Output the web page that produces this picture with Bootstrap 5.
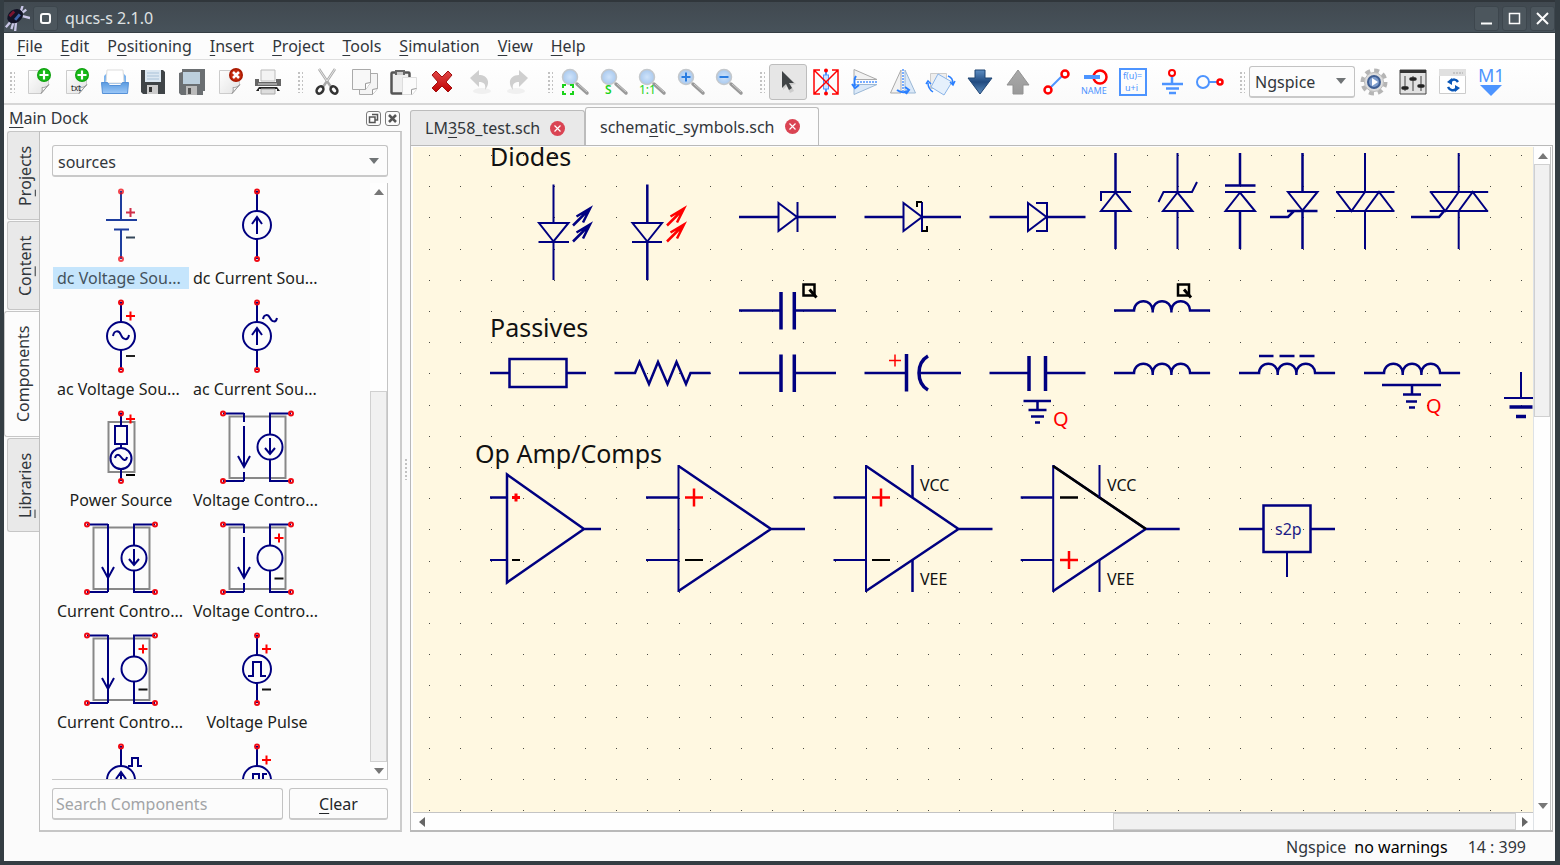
<!DOCTYPE html>
<html lang="en">
<head>
<meta charset="utf-8">
<meta name="viewport" content="width=device-width, initial-scale=1">
<title>qucs-s 2.1.0</title>
<link href="https://cdn.jsdelivr.net/npm/bootstrap@5.3.0/dist/css/bootstrap.min.css" rel="stylesheet">
<style>
body{font-family:"Noto Sans",sans-serif;font-size:16px;line-height:22px;color:#31363b;background:#30383e}
svg{display:block;flex:none}
u{text-underline-offset:3px;text-decoration-thickness:1px}
.app-window{height:100vh;border:solid #343d43;border-width:0 5px 4px 4px}
.title-row,.menu-row,.tool-row,.dock-title,.doc-tabs,.status-row{flex:none}
.title-row{height:33px;padding-top:2px;background:linear-gradient(#414950,#47525a);border-top:2px solid #30363b;border-bottom:1px solid #343d43;color:#dfe1e2;gap:3px}
.win-btn{width:25px;height:25px;background:#4c565d;border:1px solid #3d464d;border-radius:3px;color:#fcfcfc}
.client{background:#fbfbfb}
.menu-row{height:27px;border-bottom:1px solid #dedede;gap:18px;padding:0 13px;background:#fcfcfc}
.menu-row a{color:#31363b;text-decoration:none}
.tool-row{height:45px;border-bottom:2px solid #d6d6d6;background:linear-gradient(#fff,#fafafa);padding-left:5px}
.grip{width:6px;height:22px;background:radial-gradient(circle,#c2c2c2 1px,transparent 1px) 0 0/4px 4px}
.tool-group{display:flex;justify-content:space-between}
.tool-group.g7{width:267px;margin:0 10px 0 5px}
.tool-group.g6{width:229px;margin:0 10px 0 5px}
.tool-group.g5{width:192px;margin:0 11px 0 3px}
.tool-group.g12{width:460px;margin:0 10px 0 4px}
.tool-group.g4{width:155px}
.tool-btn{width:38px;height:36px;border:1px solid transparent;border-radius:3px;background:none;padding:0;display:flex;align-items:center;justify-content:center}
.tool-btn svg{overflow:visible}
.tool-btn.on{background:#e6e6e6;border-color:#bdbdbd}
.combo{font-size:16px;line-height:22px;color:#31363b;border:1px solid #c3c3c3;border-bottom:2px solid #c9c9c9;border-radius:3px;background-color:#fcfcfc;height:32px;padding:4px 28px 2px 5px;background-image:url("data:image/svg+xml,%3Csvg xmlns='http://www.w3.org/2000/svg' viewBox='0 0 10 6'%3E%3Cpath fill='%23707476' d='M0 0h10L5 6z'/%3E%3C/svg%3E");background-size:10px 6px;background-position:right 8px center}
.engine{width:106px}
.dock{width:398px;flex:none}
.dock-title{height:26px;padding:0 2px 0 5px}
.mini-btn{width:15px;height:15px;border:1px solid #7b7b7b;border-radius:3px;background:#fcfcfc;padding:0;color:#555}
.side-tabs{width:35px;flex:none;padding-left:3px;gap:1px}
.side-tab{writing-mode:vertical-rl;transform:rotate(180deg);background:#e9e9e9;border:1px solid #c6c6c6;border-left:0;border-radius:0 3px 3px 0;color:#31363b;padding:0 4px 0 2px;width:32px;text-align:center;line-height:24px;height:89px}
.side-tab u{text-underline-offset:1px}
.side-tab.on{background:#fcfcfc;width:35px;margin-left:-3px;padding:0 5px 0 3px;height:126px}
.side-tab.tall{height:94px}
.dock-page{min-width:0;border:1px solid #bfbfbf;border-right:2px solid #ccc;border-bottom:2px solid #c6c6c6;background:#fcfcfc;padding:13px 12px 10px 12px}
.parts{border-bottom:1px solid #c8c8c8;min-height:0;overflow:hidden;margin-top:6px}
.parts-grid{display:grid;grid-template-columns:136px 136px;grid-auto-rows:102px;row-gap:9px;padding:4px 0 0 1px;align-content:start;overflow:hidden;color:#1c1e20}
.part{display:flex;flex-direction:column;text-align:left;padding:0;border:0;background:none;color:inherit}
.part svg{margin:0 auto}
.part span{display:block;width:136px;height:22px;padding:0 4px;white-space:nowrap}
.part.short span{text-align:center}
.part.on span{background:#c5e5fc;color:#43525c}
.sb{background:#fefefe;border:solid #c4c4c4;display:flex;flex:none}
.sb.v{width:18px;flex-direction:column;border-width:0 1px 0 0}
.sb.h{height:18px;border-width:1px 0 0}
.sb-end{width:17px;height:17px;padding:0;border:0;background:none;display:flex;align-items:center;justify-content:center;flex:none}
.sb-thumb{background:#f1f1f1;border:1px solid #d0d0d0}
.search-box,.clear-btn{height:32px;border:1px solid #c3c3c3;border-bottom:2px solid #c9c9c9;border-radius:3px;font-size:16px;line-height:22px;background:#fcfcfc;padding:2px 3px;color:#232629}
.search-box{width:0;min-width:0}
.search-box::placeholder{color:#a2a4a6}
.clear-btn{width:99px;flex:none}
.splitter{width:8px;flex:none}
.doc-tabs{height:38px;margin-top:2px}
.doc-tab{border:1px solid #bcbcbc;border-bottom:0;border-radius:3px 3px 0 0;color:#31363b;background:#e9e9e9;height:35px;width:175px;padding:0 14px;gap:10px;text-align:left}
.doc-tab.on{background:#fcfcfc;height:38px;width:234px}
.doc-frame{border:2px solid #b9b9b9;border-width:1px 1px 2px 1px;background:#fdfdfd;padding:1px 1px 0 2px;margin-right:2px;min-height:0}
.sheet{background:#fff8e1;min-height:0;min-width:0}
.sheet svg{width:100%;height:100%;position:absolute;inset:0}
.sheet text{font-family:"Noto Sans",sans-serif}
.status-row{height:29px;padding:0 29px 0 0;gap:8px}
</style>
</head>
<body>
<svg width="0" height="0" class="position-absolute" aria-hidden="true">
<defs>
<linearGradient id="paper" x1="0" y1="0" x2="1" y2="1"><stop offset="0" stop-color="#fff"/><stop offset="1" stop-color="#e2e2e2"/></linearGradient>
<linearGradient id="blueG" x1="0" y1="0" x2="0" y2="1"><stop offset="0" stop-color="#5f8fc4"/><stop offset=".5" stop-color="#204a80"/><stop offset="1" stop-color="#5d8dc0"/></linearGradient>
<linearGradient id="greyG" x1="0" y1="0" x2="0" y2="1"><stop offset="0" stop-color="#aaa"/><stop offset="1" stop-color="#999"/></linearGradient>
<linearGradient id="redG" x1="0" y1="0" x2="0" y2="1"><stop offset="0" stop-color="#e04848"/><stop offset="1" stop-color="#c00000"/></linearGradient>
<linearGradient id="trayG" x1="0" y1="0" x2="0" y2="1"><stop offset="0" stop-color="#5a9be0"/><stop offset="1" stop-color="#9cc8f8"/></linearGradient>
<radialGradient id="lensG"><stop offset="0" stop-color="#cfe3fa"/><stop offset="1" stop-color="#a9c9ee"/></radialGradient>
<g id="page"><path d="M3.500 2.500h20v14l-7 9h-13z" fill="url(#paper)" stroke="#ccc"/><path d="M16 25.500c2-3 1-5 1-6 2 0 4 0 7-3z" fill="#f4f4f4" stroke="#999"/></g>
<g id="plusBall"><circle cx="19" cy="7" r="7" fill="#0b9e0b"/><circle cx="19" cy="7" r="6" fill="#18b818"/><path d="M14.500 7h9M19 2.500v9" stroke="#fff" stroke-width="2.200"/></g>
<g id="lens"><path d="M16 16l10 9" stroke="#999" stroke-width="3.500" stroke-linecap="round"/><path d="M17 16l9 8" stroke="#ccc" stroke-width="1"/><circle cx="9" cy="9" r="7.500" fill="url(#lensG)" stroke="#c4c8cc" stroke-width="1.500"/></g>
<g id="nd"><circle r="2" fill="none" stroke="#f00a14" stroke-width="2"/></g>
<g id="plus"><path d="M-4.500 0h9M0-4.500v9" stroke="red" fill="none"/></g>
<g id="ctl" fill="none" stroke="navy" stroke-width="2"><path d="M12.500 7.500h56v61.500h-56z" stroke="#888"/><path d="M6 4.500h21M6 72h21M74 4.500H53v21M74 72H53V50.500M21 47l6 11 6-11"/><circle cx="53" cy="38" r="12.500"/><use href="#nd" x="6" y="4.500"/><use href="#nd" x="74" y="4.500"/><use href="#nd" x="6" y="72"/><use href="#nd" x="74" y="72"/></g>
<g id="src" fill="none" stroke="navy" stroke-width="2"><path d="M40 4v20M40 52v20"/><circle cx="40" cy="38" r="14"/><use href="#nd" x="40" y="4.500"/><use href="#nd" x="40" y="72"/></g>
<path id="ell" d="M0 0h20a9.300 9.300 0 0 1 18.700 0v2v-2a9.300 9.300 0 0 1 18.700 0v2v-2a9.300 9.300 0 0 1 18.700 0h20"/>
<g id="cap"><path d="M0 0h42M55 0h42"/><path d="M42-18.500v37.500M55.300-18.500v37.500" stroke-width="3.500"/></g>
<g id="cutQ" stroke="#000" fill="none"><path d="M0 0h11v11H0z"/><path d="M6 5l7 8" stroke-width="3"/></g>
<g id="ledArrow"><path d="M0 17L17 0M3.500 8L17 0l-7 14M0 33l17-17M3.500 24L17 16l-7 14"/></g>
</defs>
</svg>

<div class="app-window d-flex flex-column">
<header class="title-row d-flex align-items-center">
  <svg width="26" height="25" viewBox="0 0 28 25"><path d="M2 22l6-7M8 24l3-10M12 26l1-10M20 10l8 2M18 5l2-6M20 6l4-3" stroke="#c9c6e6" stroke-width="2.500"/><ellipse cx="12" cy="10" rx="9" ry="7" transform="rotate(-35 12 10)" fill="#121225"/><path d="M6 10l5-5" stroke="#7a1530" stroke-width="3"/><path d="M12 14l5-6" stroke="#3e63a8" stroke-width="3"/></svg>
  <button class="win-btn p-0 d-flex align-items-center justify-content-center" aria-label="Window menu"><svg width="13" height="13"><rect x="2" y="2" width="9" height="9" rx="2" fill="none" stroke="#fcfcfc" stroke-width="2"/></svg></button>
  <span class="me-auto ps-1">qucs-s 2.1.0</span>
  <button class="win-btn p-0 d-flex align-items-center justify-content-center" aria-label="Minimize"><svg width="13" height="13"><path d="M1 11.500h11" stroke="#fcfcfc" stroke-width="2"/></svg></button>
  <button class="win-btn p-0 d-flex align-items-center justify-content-center" aria-label="Maximize"><svg width="13" height="13"><path d="M1.500 1.500h10v10h-10z" fill="none" stroke="#fcfcfc" stroke-width="1.500"/></svg></button>
  <button class="win-btn p-0 d-flex align-items-center justify-content-center" aria-label="Close"><svg width="13" height="13"><path d="M1 1l11 11M12 1L1 12" stroke="#fcfcfc" stroke-width="2"/></svg></button>
</header>
<div class="client d-flex flex-column flex-grow-1" style="min-height:0">
<nav class="menu-row d-flex align-items-center">
  <a href="#"><u>F</u>ile</a><a href="#"><u>E</u>dit</a><a href="#">P<u>o</u>sitioning</a><a href="#"><u>I</u>nsert</a><a href="#"><u>P</u>roject</a><a href="#"><u>T</u>ools</a><a href="#"><u>S</u>imulation</a><a href="#"><u>V</u>iew</a><a href="#"><u>H</u>elp</a>
</nav>
<div class="tool-row d-flex align-items-center">
  <span class="grip"></span>
  <div class="tool-group g7">
    <button class="tool-btn" aria-label="New"><svg width="28" height="28"><use href="#page"/><use href="#plusBall"/></svg></button>
    <button class="tool-btn" aria-label="New text"><svg width="28" height="28"><use href="#page"/><use href="#plusBall"/><text x="8" y="23" font-size="8" fill="#222">txt</text></svg></button>
    <button class="tool-btn" aria-label="Open"><svg width="28" height="28"><path d="M3 8l3-3h16l3 3v8H3z" fill="#7db4ee"/><path d="M6 2h16l1 13H5z" fill="#fff" stroke="#ddd"/><path d="M.5 14.500h6l2 3h11l2-3h6l-1 11h-25z" fill="url(#trayG)" stroke="#5591d8"/></svg></button>
    <button class="tool-btn" aria-label="Save"><svg width="28" height="28"><path d="M2 2h22l2 2v22H4l-2-2z" fill="#3f4447"/><path d="M6 2h16v12H6z" fill="#dce8f2"/><path d="M8 5h12M8 8h12M8 11h12" stroke="#a9c2d8"/><path d="M8 17h11v9H8z" fill="#ccc"/><path d="M10 19h3v5h-3z" fill="#333"/></svg></button>
    <button class="tool-btn" aria-label="Save all"><svg width="28" height="28"><path d="M4 1h23v22h-2v4H3l-2-2V5l3-1z" fill="#6b6f72"/><path d="M5 4h17v12H5z" fill="#bccfdd"/><path d="M8 18h11v9H8z" fill="#bbb"/><path d="M10 20h3v6h-3z" fill="#555"/></svg></button>
    <button class="tool-btn" aria-label="Close file"><svg width="28" height="28"><use href="#page"/><circle cx="20" cy="7" r="7" fill="#a81800"/><circle cx="20" cy="7" r="5.500" fill="#c42b0c"/><path d="M17 4l6 6M23 4l-6 6" stroke="#fff" stroke-width="2.500"/></svg></button>
    <button class="tool-btn" aria-label="Print"><svg width="28" height="28"><path d="M7 2h14v11H7z" fill="#f3f3f3" stroke="#bbb"/><path d="M1 11h4v3h17v-3h5v7H1z" fill="#666"/><path d="M4 16h19" stroke="#ddd"/><path d="M5 19h18l3 4h-3v-2H5v2H2z" fill="#222"/><path d="M7 21h14v5H7z" fill="#ddd" stroke="#aaa"/></svg></button>
  </div>
  <span class="grip"></span>
  <div class="tool-group g6">
    <button class="tool-btn" aria-label="Cut"><svg width="28" height="28"><path d="M6 1l12 18M22 1L10 19" stroke="#aaa" stroke-width="2.500"/><path d="M6 1l8 12M22 1l-8 12" stroke="#e8e8e8"/><ellipse cx="7" cy="22" rx="3" ry="4" transform="rotate(40 7 22)" fill="none" stroke="#333" stroke-width="2.500"/><ellipse cx="21" cy="22" rx="3" ry="4" transform="rotate(-40 21 22)" fill="none" stroke="#333" stroke-width="2.500"/></svg></button>
    <button class="tool-btn" aria-label="Copy"><svg width="28" height="28"><path d="M8.500 5.500h18v15l-5 6h-13z" fill="#f4f4f4" stroke="#aaa"/><path d="M1.500 1.500h18v13l-5 7h-13z" fill="#f8f8f8" stroke="#aaa"/><path d="M14.500 21.500v-6l5-1M21.500 26.500v-5l5-1" fill="#fff" stroke="#999"/></svg></button>
    <button class="tool-btn" aria-label="Paste"><svg width="28" height="28"><rect x="2.500" y="4.500" width="18" height="21" rx="1" fill="#eee" stroke="#555" stroke-width="2.500"/><path d="M6 2h10v5H6z" fill="#666"/><path d="M8 4h6v3H8z" fill="#ccc"/><path d="M13.500 9.500h14v12l-4 5h-10z" fill="#fbfbfb" stroke="#ddd"/><path d="M22.500 26.500v-5l5-1" fill="#fff" stroke="#999"/></svg></button>
    <button class="tool-btn" aria-label="Delete"><svg width="28" height="28"><path d="M4 7l4-4 6 6 6-6 4 4-6 7 6 6-4 4-6-6-6 6-4-4 6-6z" fill="url(#redG)" stroke="#a01010"/></svg></button>
    <button class="tool-btn" aria-label="Undo"><svg width="28" height="28"><ellipse cx="16" cy="23" rx="9" ry="3" fill="#f0f0f0"/><path d="M4 10l9-8v5c9 0 12 8 6 15 1-6-1-8-6-8v5z" fill="#cfcfcf"/></svg></button>
    <button class="tool-btn" aria-label="Redo"><svg width="28" height="28"><ellipse cx="12" cy="23" rx="9" ry="3" fill="#f0f0f0"/><path d="M24 10l-9-8v5c-9 0-12 8-6 15-1-6 1-8 6-8v5z" fill="#cfcfcf"/></svg></button>
  </div>
  <span class="grip"></span>
  <div class="tool-group g5">
    <button class="tool-btn" aria-label="Zoom to fit"><svg width="28" height="28"><use href="#lens"/><path d="M2 20v-3h3M9 17h3v3M12 23v3H9M5 26H2v-3" fill="none" stroke="#1bd31b" stroke-width="2"/></svg></button>
    <button class="tool-btn" aria-label="Zoom to selection"><svg width="28" height="28"><use href="#lens"/><text x="5" y="26" font-size="12" font-weight="600" fill="#1bd31b">S</text></svg></button>
    <button class="tool-btn" aria-label="Zoom 1:1"><svg width="28" height="28"><use href="#lens"/><text x="1" y="26" font-size="12" fill="#1bd31b">1:1</text></svg></button>
    <button class="tool-btn" aria-label="Zoom in"><svg width="28" height="28"><use href="#lens"/><path d="M4.500 9h9M9 4.500v9" stroke="#2a7de1" stroke-width="2"/></svg></button>
    <button class="tool-btn" aria-label="Zoom out"><svg width="28" height="28"><use href="#lens"/><path d="M4.500 9h9" stroke="#2a7de1" stroke-width="2"/></svg></button>
  </div>
  <span class="grip"></span>
  <div class="tool-group g12">
    <button class="tool-btn on" aria-label="Select"><svg width="28" height="28"><path d="M9 4v18l4-4 3 7 4-2-3-6 5-1z" fill="#ccc"/><path d="M8 3v17l4-4 3 6 3-2-3-5h5z" fill="#3f4345"/></svg></button>
    <button class="tool-btn" aria-label="Deactivate"><svg width="28" height="28"><rect x="11.500" y="7" width="5" height="14" fill="#cfe3ff" stroke="#4d94ff"/><path d="M14 3v4M14 21v4" stroke="#4d94ff" stroke-width="2"/><path d="M8 2H2v24h6M20 2h6v24h-6M2 2l24 24M26 2L2 26" fill="none" stroke="red" stroke-width="1.500"/><circle cx="14" cy="2.500" r="2" fill="red"/><circle cx="14" cy="25.500" r="2" fill="red"/></svg></button>
    <button class="tool-btn" aria-label="Mirror about X"><svg width="28" height="28"><path d="M3 1.500l23 10H3z" fill="#f2f2f2" stroke="#aaa"/><path d="M3 26.500l23-10H3z" fill="#dbe9f8" stroke="#9bb8d6"/><path d="M6 14h20" stroke="#4d94ff" stroke-width="1.500" stroke-dasharray="2 1"/><path d="M5 8c-2 3-2 6-1 10M1 16l3 4 4-3" fill="none" stroke="#2a7fff" stroke-width="2"/></svg></button>
    <button class="tool-btn" aria-label="Mirror about Y"><svg width="28" height="28"><path d="M1.500 25L12 2v23z" fill="#f2f2f2" stroke="#aaa"/><path d="M26.500 25L16 2v23z" fill="#dbe9f8" stroke="#9bb8d6"/><path d="M14 1v22" stroke="#4d94ff" stroke-width="1.500" stroke-dasharray="2 1"/><path d="M8 22c4 3 7 3 11 1M16 19l4 3-3 4" fill="none" stroke="#2a7fff" stroke-width="2"/></svg></button>
    <button class="tool-btn" aria-label="Rotate"><svg width="28" height="28"><path d="M3.500 5.500h16v15h-16z" fill="#eee" stroke="#ccc"/><path d="M11 6l14 8-8 13-13-8z" fill="#e5f0fc" stroke="#8ab4e8"/><path d="M1 15c0 5 2 7 5 9M-1 16l2-3 3 3M21 8c3 1 5 3 5 8M23 14l3 3 2-4" fill="none" stroke="#2a7fff" stroke-width="1.500"/></svg></button>
    <button class="tool-btn" aria-label="Into subcircuit"><svg width="28" height="28"><path d="M9 2h10v8h7L14 26 2 10h7z" fill="url(#blueG)" stroke="#1f4473"/></svg></button>
    <button class="tool-btn" aria-label="Pop out"><svg width="28" height="28"><path d="M9 26h10v-9h6L14 2 3 17h6z" fill="url(#greyG)" stroke="#929292"/></svg></button>
    <button class="tool-btn" aria-label="Wire"><svg width="28" height="28"><path d="M7 20L20 7" stroke="#4d94ff" stroke-width="2"/><circle cx="5" cy="22" r="3.500" fill="#fff" stroke="red" stroke-width="2.500"/><circle cx="22" cy="6" r="3.500" fill="#fff" stroke="red" stroke-width="2.500"/></svg></button>
    <button class="tool-btn" aria-label="Wire label"><svg width="28" height="28"><circle cx="19" cy="9" r="6.500" fill="none" stroke="red" stroke-width="2.500"/><path d="M3 9h16" stroke="#4d94ff" stroke-width="4"/><text x="0" y="26" font-size="9" fill="#4d94ff">NAME</text></svg></button>
    <button class="tool-btn" aria-label="Equation"><svg width="28" height="28"><path d="M1 1h26v26H1z" fill="none" stroke="#4d94ff" stroke-width="2"/><text x="4" y="11" font-size="9" fill="#4d94ff">f(u)=</text><text x="6" y="23" font-size="9" fill="#4d94ff">u+i</text></svg></button>
    <button class="tool-btn" aria-label="Ground"><svg width="28" height="28"><path d="M14 8v8M4 16h21M8 20.500h13M11 25h7" stroke="#4d94ff" stroke-width="2.500"/><circle cx="14" cy="5" r="3" fill="#fff" stroke="red" stroke-width="2"/></svg></button>
    <button class="tool-btn" aria-label="Port"><svg width="28" height="28"><path d="M13 14h8" stroke="#4d94ff" stroke-width="2"/><circle cx="7" cy="14" r="6" fill="none" stroke="#4d94ff" stroke-width="2"/><circle cx="24" cy="14" r="2.500" fill="none" stroke="red" stroke-width="2.500"/></svg></button>
  </div>
  <span class="grip me-1"></span>
  <select class="form-select combo engine" aria-label="Simulator"><option>Ngspice</option></select>
  <div class="tool-group g4">
    <button class="tool-btn" aria-label="Simulate"><svg width="28" height="28"><circle cx="14" cy="14" r="11.500" fill="none" stroke="#b5b5b5" stroke-width="4" stroke-dasharray="5 4"/><circle cx="14" cy="14" r="9.500" fill="#ddd" stroke="#bbb"/><circle cx="14" cy="14" r="7" fill="#3f5e92"/><circle cx="14" cy="14" r="5" fill="#7d9ccc"/><path d="M12 10l6 4-6 4z" fill="#fff"/></svg></button>
    <button class="tool-btn" aria-label="Tuner"><svg width="28" height="28"><path d="M1 2h26v24H1z" fill="#e2e2e2" stroke="#444"/><path d="M1 2h26v3H1z" fill="#333"/><path d="M6 8v15M14 8v15M22 8v15" stroke="#777" stroke-width="1.500"/><path d="M4 20h4M12 11h4M20 18h4" stroke="#222" stroke-width="3.500" stroke-linecap="round"/></svg></button>
    <button class="tool-btn" aria-label="View data"><svg width="28" height="28"><path d="M1.500 1.500h26v24h-26z" fill="#fff" stroke="#ccc"/><path d="M1 1h27v7H1z" fill="#e0e0e0"/><path d="M15 5h10" stroke="#bbb" stroke-width="1.500" stroke-dasharray="2 1"/><path d="M20 14c-2-3-5-3-7-1M10 19c2 4 6 4 8 2" fill="none" stroke="#0a57b8" stroke-width="2.500"/><path d="M9 14l5-4v7zM22 20l-5-3v7z" fill="#0a57b8"/></svg></button>
    <button class="tool-btn" aria-label="Marker"><svg width="28" height="28"><text x="1" y="14" font-size="18" fill="#4d94ff">M1</text><path d="M3 17h22L14 28z" fill="#4d94ff"/></svg></button>
  </div>
</div>

<main class="d-flex flex-grow-1" style="min-height:0">
<aside class="dock d-flex flex-column">
  <div class="dock-title d-flex align-items-center gap-1"><span class="me-auto"><u>M</u>ain Dock</span>
    <button class="mini-btn" aria-label="Float"><svg width="13" height="13"><path d="M5 2.500h5.500V8H8M2.500 5H8v5.500H2.500z" fill="none" stroke="#555" stroke-width="1.500"/></svg></button>
    <button class="mini-btn" aria-label="Close dock"><svg width="13" height="13"><path d="M3 3l7 7M10 3l-7 7" stroke="#555" stroke-width="2.500"/></svg></button>
  </div>
  <div class="d-flex flex-grow-1" style="min-height:0">
    <div class="side-tabs d-flex flex-column">
      <button class="side-tab">P<u>r</u>ojects</button><button class="side-tab">Co<u>n</u>tent</button><button class="side-tab on">Components</button><button class="side-tab tall"><u>L</u>ibraries</button>
    </div>
    <div class="dock-page flex-grow-1 d-flex flex-column">
      <select class="form-select combo flex-shrink-0" aria-label="Category"><option>sources</option></select>
      <div class="parts d-flex flex-grow-1">
        <div class="parts-grid flex-grow-1">
          <button class="part on"><svg width="80" height="80" fill="none" stroke="#1d3d9e" stroke-width="2"><path d="M40 4v29M25 33h31M33 42.500h15M40 42.500V72"/><path d="M45 25.500h9M49.500 21v9" stroke="#cf2f4a"/><path d="M45 50.500h9" stroke="#34475a"/><g opacity=".75"><use href="#nd" x="40" y="4.500"/><use href="#nd" x="40" y="72"/></g></svg><span>dc Voltage Sou...</span></button>
          <button class="part"><svg width="80" height="80"><use href="#src"/><path d="M40 47V30M35 37l5-7 5 7" fill="none" stroke="navy" stroke-width="2"/></svg><span>dc Current Sou...</span></button>
          <button class="part"><svg width="80" height="80" stroke-width="2" fill="none"><use href="#src"/><path d="M32 38c1-6 6-6 8-1s7 6 8 0" stroke="navy"/><use href="#plus" x="49.500" y="18"/><path d="M45 58h9" stroke="#222"/></svg><span>ac Voltage Sou...</span></button>
          <button class="part"><svg width="80" height="80" stroke-width="2" fill="none"><use href="#src"/><path d="M40 47V30M35 37l5-7 5 7M46 21c1-5 5-5 7-1s6 5 7 0" stroke="navy"/></svg><span>ac Current Sou...</span></button>
          <button class="part short"><svg width="80" height="80" stroke-width="2" fill="none"><path d="M27.500 13h26v50h-26z" stroke="#888"/><path d="M40 4v13M40 35v4M40 60v12M34 17h12v18H34zM34 49c1-4 4-4 6-1s5 5 6 0" stroke="navy"/><circle cx="40" cy="49.500" r="10.500" stroke="navy"/><use href="#nd" x="40" y="4.500"/><use href="#nd" x="40" y="72"/><use href="#plus" x="49.500" y="10"/><path d="M45 66h9" stroke="#000"/></svg><span>Power Source</span></button>
          <button class="part"><svg width="80" height="80" fill="none" stroke="navy" stroke-width="2"><use href="#ctl"/><path d="M27 4v9M27 17v41M27 63v9M53 29v15M48 39l5 6 5-6"/></svg><span>Voltage Contro...</span></button>
          <button class="part"><svg width="80" height="80" fill="none" stroke="navy" stroke-width="2"><use href="#ctl"/><path d="M27 4v68M53 29v15M48 39l5 6 5-6"/></svg><span>Current Contro...</span></button>
          <button class="part"><svg width="80" height="80" fill="none" stroke="navy" stroke-width="2"><use href="#ctl"/><path d="M27 4v9M27 17v41M27 63v9"/><use href="#plus" x="62" y="18"/><path d="M57.500 58.500h9" stroke="#111"/></svg><span>Voltage Contro...</span></button>
          <button class="part"><svg width="80" height="80" fill="none" stroke="navy" stroke-width="2"><use href="#ctl"/><path d="M27 4v68"/><use href="#plus" x="62" y="18"/><path d="M57.500 58.500h9" stroke="#111"/></svg><span>Current Contro...</span></button>
          <button class="part short"><svg width="80" height="80" fill="none" stroke="navy" stroke-width="2"><use href="#src"/><path d="M31 45h5V31h8v14h5"/><use href="#plus" x="49.500" y="18"/><path d="M45 58.500h9" stroke="#111"/></svg><span>Voltage Pulse</span></button>
          <button class="part" aria-label="Current Pulse"><svg width="80" height="80" fill="none" stroke="navy" stroke-width="2"><use href="#src"/><path d="M40 47V30M35 37l5-7 5 7M47 24h4v-8h6v8h4"/></svg></button>
          <button class="part" aria-label="Rectangle Voltage"><svg width="80" height="80" fill="none" stroke="navy" stroke-width="2"><use href="#src"/><path d="M33 45h3V32h6v13h4V32h4"/><use href="#plus" x="49.500" y="18"/></svg></button>
        </div>
        <div class="sb v"><button class="sb-end" aria-label="Scroll up"><svg width="10" height="6"><path d="M0 6h10L5 0z" fill="#777"/></svg></button><div style="height:32%"></div><div class="sb-thumb flex-grow-1"></div><button class="sb-end" aria-label="Scroll down"><svg width="10" height="6"><path d="M0 0h10L5 6z" fill="#777"/></svg></button></div>
      </div>
      <div class="d-flex mt-2" style="gap:6px"><input class="search-box flex-grow-1" type="text" placeholder="Search Components" aria-label="Search Components"><button class="clear-btn"><u>C</u>lear</button></div>
    </div>
  </div>
</aside>
<div class="splitter d-flex align-items-center justify-content-center"><span class="grip" style="width:4px"></span></div>
<section class="d-flex flex-column flex-grow-1" style="min-width:0">
  <div class="doc-tabs d-flex align-items-end">
    <button class="doc-tab d-flex align-items-center"><span>LM<u>3</u>58_test.sch</span><svg width="15" height="15"><circle cx="7.500" cy="7.500" r="7.500" fill="#da4453"/><path d="M4.500 4.500l6 6M10.500 4.500l-6 6" stroke="#fff" stroke-width="1.200"/></svg></button>
    <button class="doc-tab on d-flex align-items-center"><span>schem<u>a</u>tic_symbols.sch</span><svg width="15" height="15"><circle cx="7.500" cy="7.500" r="7.500" fill="#da4453"/><path d="M4.500 4.500l6 6M10.500 4.500l-6 6" stroke="#fff" stroke-width="1.200"/></svg></button>
  </div>
  <div class="doc-frame d-flex flex-grow-1">
    <div class="d-flex flex-column flex-grow-1" style="min-width:0">
      <div class="sheet flex-grow-1 position-relative overflow-hidden">
<svg role="img" aria-label="Schematic"><g transform="translate(-413 -147)" fill="none" stroke="navy" stroke-width="2.500">
<path id="dots" stroke="#4a4a44" stroke-width="1" shape-rendering="crispEdges"/>
<g fill="#111" stroke="none" font-size="25"><text x="490" y="166">Diodes</text><text x="490" y="337">Passives</text><text x="475" y="463">Op Amp/Comps</text></g>
<path d="M553.500 184.500v38M553.500 242v38M539 223h29.500L553.500 241.500zM538.500 242h30.500" stroke-width="2"/><use href="#ledArrow" x="573" y="208.500"/>
<path d="M647.300 184.500v38M647.300 242v38"/><path d="M632.500 223h29.500L647.300 241.500zM632 242h30" stroke-width="2"/><use href="#ledArrow" x="667" y="208.500" stroke="red"/>
<path d="M739 217h39M797.500 217h38.500"/><path d="M778.500 203v28L797 217zM797.500 202v30" stroke-width="2"/>
<path d="M864.500 217h39M922 217h39"/><path d="M903.500 203v28L922 217zM922 202v30" stroke-width="2"/><path d="M917 207v-5h5M922 231h5v-5" stroke="#000" stroke-width="2"/>
<path d="M989.500 217h39M1047 217h38.500"/><path d="M1028 203v28L1046.500 217zM1036 203h11v28h-11" stroke-width="2"/>
<path d="M1115.500 153v39M1115.500 211v38"/><path d="M1101 211h29.500L1115.500 192.500zM1101 201v-9h30" stroke-width="2"/>
<path d="M1177.500 153v39M1177.500 211v38M1163 211h29.500L1177.500 192.500zM1158.500 202l5-10h28.500l5-10" stroke-width="2"/>
<path d="M1240 153v32M1240 211v38M1225 185.500h30.500"/><path d="M1225.500 211h29.500L1240 192.500zM1225 192h30.500" stroke-width="2"/>
<path d="M1302.500 153v39M1302.500 211v38M1287 211h30.500M1270 217h18l6-6"/><path d="M1288 192h29.500L1302.500 210.500z" stroke-width="2"/>
<g id="diac" stroke-width="2"><path d="M1365 153v39M1365 211v38M1336 192h58.500M1336 211h58.500M1337 192l14.500 19L1365 192M1365 211l14-19 14.500 19"/></g>
<use href="#diac" x="93.700"/><path d="M1411 217h28l6-7"/>
<use href="#cap" x="739" y="310.500"/><use href="#cutQ" x="803.500" y="284.500"/>
<use href="#ell" x="1114" y="310.500"/><use href="#cutQ" x="1178" y="284.500"/>
<path d="M490 373h19M567 373h19M509.500 359h57v28h-57z"/>
<path d="M614.500 373h20.500l4.500-11 9.500 22 9-22 9.500 22 9-22 9.500 22 4.500-11h20"/>
<use href="#cap" x="739" y="373"/>
<path d="M864.500 373h42M918.500 373h42.500"/><path d="M906.500 354v37.500M928 356c-12 7-12 27 0 34" stroke-width="3.500"/><path d="M889 360.500h12M895 354.500v12" stroke="red" stroke-width="1.500"/>
<path d="M989.500 373h39.500M1045.500 373h40M1023.500 401h27.500M1037.500 401v9M1028.500 410h18M1031 416.500h13M1035 422.500h5"/><path d="M1029 356v35M1045.500 356v35" stroke-width="3.500"/>
<use href="#ell" x="1114" y="373"/><use href="#ell" x="1239" y="373"/><path d="M1259 356h14.500M1279.500 356h15M1299.500 356h15"/>
<use href="#ell" x="1364" y="373"/><path d="M1382 385h59M1412 385v9M1403 394.500h18M1406 401.500h11M1409 407.500h6"/>
<path d="M1521 372v26M1504 398h30" stroke-width="2"/><path d="M1509.500 407h23M1516 416.500h10" stroke-width="3.500"/>
<g fill="red" stroke="none" font-size="20"><text x="1053" y="426">Q</text><text x="1426" y="413">Q</text></g>
<path d="M490 497.500h17M507 474.500v108l77-53.500zM584 529h17"/><path d="M490 560h17" stroke-width="2"/><path d="M512 497.500h8M516 493.500v8" stroke="red" stroke-width="3"/><path d="M512 560h8" stroke="#000" stroke-width="2"/>
<g id="amp"><path d="M646 497.500h32M771 529h34M678.500 466L771 529l-92.500 62"/><path d="M646 560h32M678.500 465v127" stroke-width="2"/></g><path d="M685 497.500h18M694 488.500v18" stroke="red"/><path d="M685 560h18" stroke="#000" stroke-width="2"/>
<use href="#amp" x="187.500"/><path d="M872 497.500h18M881 488.500v18" stroke="red"/><path d="M872 560h18" stroke="#000" stroke-width="2"/><path d="M912.500 465v32.500M912.500 560v32"/>
<use href="#amp" x="374.700"/><path d="M1060 560h18M1069 551v18" stroke="red"/><path d="M1060 497.500h18M1053 466l93 63" stroke="#000"/><path d="M1099.500 465v32.500M1099.500 560v32" stroke-width="2"/>
<g fill="#111" stroke="none" font-size="16"><text x="920" y="491">VCC</text><text x="920" y="585">VEE</text><text x="1107" y="491">VCC</text><text x="1107" y="585">VEE</text><text x="1275" y="535" fill="#1b1b86">s2p</text></g>
<path d="M1239 529h24M1311 529h24M1263.500 505.500h47v46.500h-47z"/><path d="M1287 552v25" stroke-width="2"/>
</g></svg>
      </div>
      <div class="sb h"><button class="sb-end" aria-label="Scroll left"><svg width="6" height="10"><path d="M6 0v10L0 5z" fill="#666"/></svg></button><div class="flex-grow-1"></div><div class="sb-thumb" style="width:36%"></div><button class="sb-end" aria-label="Scroll right"><svg width="6" height="10"><path d="M0 0v10l6-5z" fill="#666"/></svg></button></div>
    </div>
    <div class="sb v border-start"><button class="sb-end" aria-label="Scroll up"><svg width="10" height="6"><path d="M0 6h10L5 0z" fill="#777"/></svg></button><div class="sb-thumb" style="height:37%"></div><div class="flex-grow-1"></div><button class="sb-end mb-3" aria-label="Scroll down"><svg width="10" height="6"><path d="M0 0h10L5 6z" fill="#777"/></svg></button></div>
  </div>
</section>
</main>
<footer class="status-row d-flex align-items-center justify-content-end"><span>Ngspice</span><span class="text-black me-2">no warnings</span><span class="ps-1">14 : 399</span></footer>
</div>
</div>
<script src="https://cdn.jsdelivr.net/npm/bootstrap@5.3.0/dist/js/bootstrap.bundle.min.js"></script>
<script>
// Grid points of the drawing sheet
let d = '';
for (let i = 0; i < 60; i++) for (let j = 0; j < 40; j++)
  d += 'M' + Math.round(429 + i * 31.2) + ' ' + (Math.round(155 + j * 31.2) + .5) + 'h1';
document.getElementById('dots').setAttribute('d', d);
</script>
</body>
</html>
